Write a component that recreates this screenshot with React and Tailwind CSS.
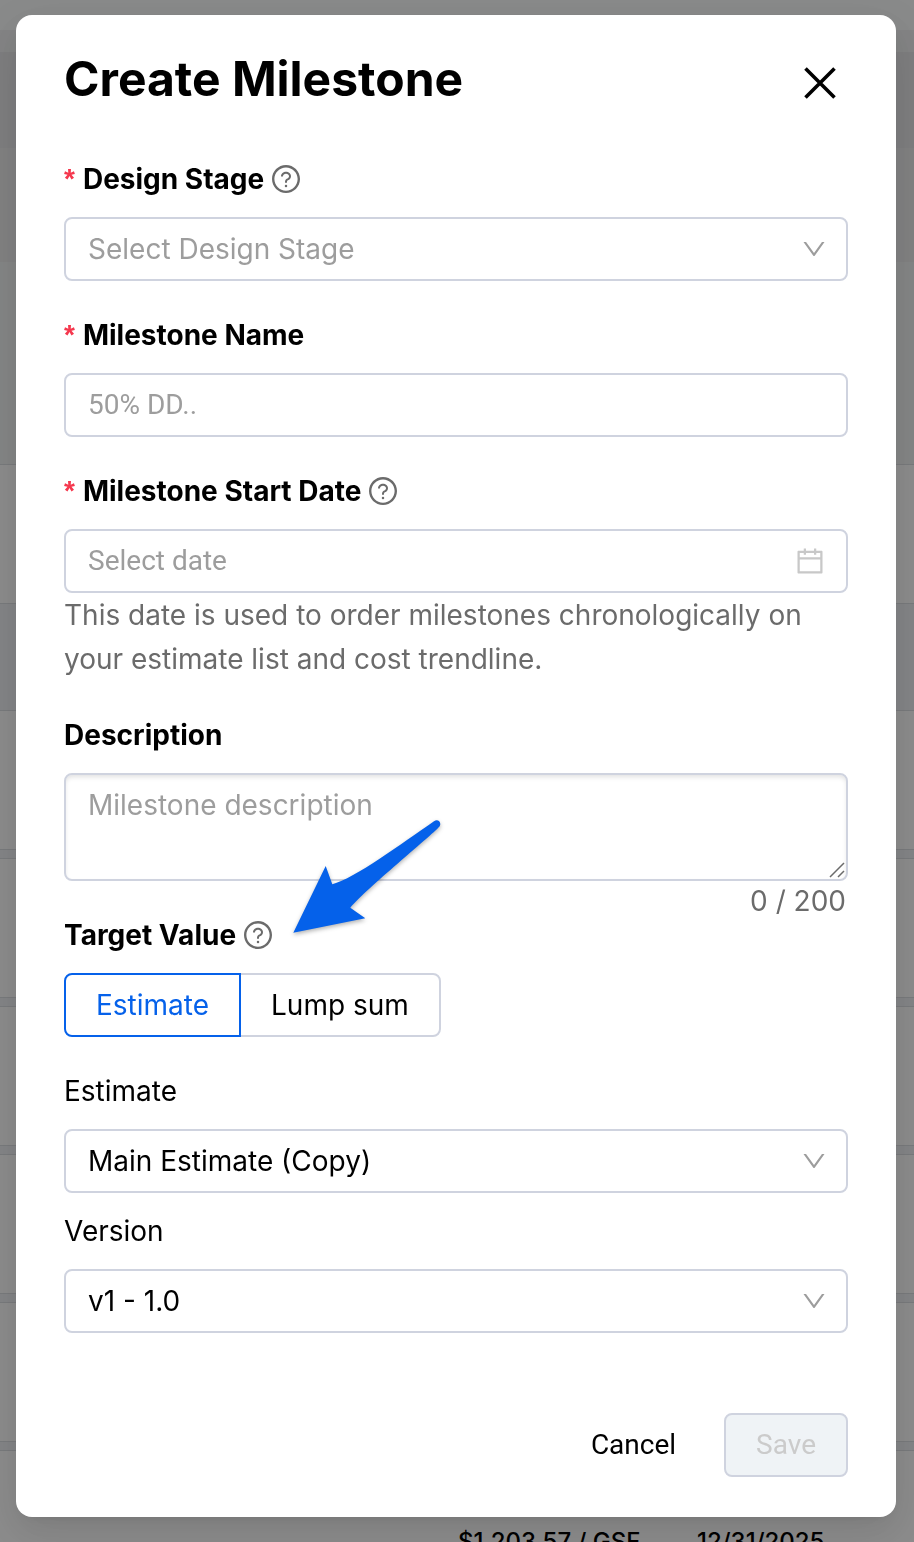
import { useState } from "react";
import { AiOutlineCalendar, AiOutlineDown, AiOutlineQuestionCircle } from "react-icons/ai";

const MAX_DESCRIPTION = 200;

const FIELD_CLASS =
  "block h-16 w-full appearance-none rounded-lg border-2 border-[#cfd3df] bg-white px-[22px] text-[28px] leading-10 outline-none placeholder:text-[#9d9d9d]";

export default function App() {
  return (
    <div className="h-screen overflow-hidden bg-white font-['Inter',sans-serif] text-black">
      <EstimateList />
      <div className="fixed inset-0 overflow-y-auto bg-black/45 px-4 pt-[15px] pb-6">
        <div className="mr-0.5">
          <CreateMilestoneModal />
        </div>
      </div>
    </div>
  );
}

function EstimateList() {
  return (
    <div>
      <div className="h-[30px] bg-[#fafbfc]" />
      <div className="h-[22px] bg-[#f0f1f2]" />
      <div className="h-24 bg-[#e6e6e9]" />
      <div className="h-[114px] bg-[#ececed]" />
      <div className="h-[203px] border-b border-[#dcdfe3] bg-[#f1f3f4]" />
      <div className="h-[139px] border-b border-[#dcdfe3]" />
      <div className="h-[107px] border-b border-[#dcdfe3] bg-[#f0f2f5]" />
      {[1, 2, 3, 4, 5].map((row) => (
        <div key={row}>
          <div className="h-[139px] border-b border-[#dcdfe3]" />
          <div className="h-[9px] border-b border-[#dcdfe3] bg-[#f0f2f5]" />
        </div>
      ))}
      <div className="grid grid-cols-[458px_239px_1fr] pt-[75px] text-2xl font-medium">
        <span />
        <span>$1,203.57 / GSF</span>
        <span>12/31/2025</span>
      </div>
    </div>
  );
}

function CreateMilestoneModal() {
  const [stage, setStage] = useState("");
  const [name, setName] = useState("");
  const [startDate, setStartDate] = useState("");
  const [description, setDescription] = useState("");
  const [targetType, setTargetType] = useState("estimate");
  const canSave = stage && name && startDate;

  return (
    <form
      role="dialog"
      aria-labelledby="modal-title"
      onSubmit={(e) => e.preventDefault()}
      className="rounded-2xl bg-white px-12 pt-8 pb-10 shadow-[0_12px_32px_0_rgba(0,0,0,0.08),0_6px_12px_-8px_rgba(0,0,0,0.12),0_18px_56px_16px_rgba(0,0,0,0.05)]"
    >
      <div className="mb-[46px] flex items-center justify-between">
        <h1 id="modal-title" className="text-5xl leading-[64px] font-bold">Create Milestone</h1>
        <button type="button" aria-label="Close" className="mt-2 mr-3">
          <svg viewBox="0 0 32 32" className="size-8" stroke="currentColor" strokeWidth="3.6" fill="none">
            <path d="M1.5 1.5 L30.5 30.5 M30.5 1.5 L1.5 30.5" />
          </svg>
        </button>
      </div>

      <div className="mb-8">
        <FieldLabel htmlFor="stage" required help>Design Stage</FieldLabel>
        <SelectField id="stage" value={stage} onChange={(e) => setStage(e.target.value)} muted={!stage}>
          <option value="">Select Design Stage</option>
          <option value="sd">Schematic Design</option>
          <option value="dd">Design Development</option>
        </SelectField>
      </div>

      <div className="mb-8">
        <FieldLabel htmlFor="name" required>Milestone Name</FieldLabel>
        <input id="name" type="text" placeholder="50% DD.." value={name} onChange={(e) => setName(e.target.value)} className={`${FIELD_CLASS} pb-0.5 font-['Roboto',sans-serif]`} />
      </div>

      <div className="mb-8">
        <FieldLabel htmlFor="start-date" required help>Milestone Start Date</FieldLabel>
        <div className="relative">
          <input id="start-date" type="text" placeholder="Select date" value={startDate} onChange={(e) => setStartDate(e.target.value)} className={`${FIELD_CLASS} pb-0.5 font-['Roboto',sans-serif]`} />
          <AiOutlineCalendar className="pointer-events-none absolute top-4 right-[22px] size-8 text-[#c8c8c8]" />
        </div>
        <p className="text-[28px] leading-11 text-[#6b6b6b]">This date is used to order milestones chronologically on your estimate list and cost trendline.</p>
      </div>

      <div>
        <FieldLabel htmlFor="description">Description</FieldLabel>
        <div className="relative">
          <textarea
            id="description"
            placeholder="Milestone description"
            maxLength={MAX_DESCRIPTION}
            value={description}
            onChange={(e) => setDescription(e.target.value)}
            className="block h-[108px] w-full resize-none rounded-lg border-2 border-[#cfd3df] px-[22px] py-2 text-[28px] leading-11 shadow-[inset_0_3px_5px_-1px_rgba(0,0,0,0.12)] outline-none placeholder:text-[#9d9d9d]"
          />
          <svg viewBox="0 0 16 16" className="pointer-events-none absolute right-[3px] bottom-[3px] size-4" stroke="#6b6b6b" strokeWidth="1.5" fill="none">
            <path d="M1 15 L15 1 M9 15 L15 9" />
          </svg>
        </div>
        <p className="-mb-2 pr-0.5 text-right text-[28px] leading-10 text-[#6b6b6b]">{description.length} / {MAX_DESCRIPTION}</p>
      </div>

      <fieldset className="mb-8">
        <legend className="relative block">
          <FieldLabel as="span" help>Target Value</FieldLabel>
          <PointerArrow />
        </legend>
        <div className="flex text-[28px]">
          <RadioButton name="target" value="estimate" current={targetType} onSelect={setTargetType} className="rounded-l-lg">Estimate</RadioButton>
          <RadioButton name="target" value="lump" current={targetType} onSelect={setTargetType} className="-ml-0.5 rounded-r-lg">Lump sum</RadioButton>
        </div>
      </fieldset>

      <div className="mb-4">
        <label htmlFor="estimate" className="mb-4 block text-[28px] leading-11">Estimate</label>
        <SelectField id="estimate">
          <option>Main Estimate (Copy)</option>
        </SelectField>
      </div>

      <div className="mb-20">
        <label htmlFor="version" className="mb-4 block text-[28px] leading-11">Version</label>
        <SelectField id="version">
          <option>v1 - 1.0</option>
        </SelectField>
      </div>

      <div className="flex justify-end gap-4 font-['Roboto',sans-serif] text-[28px]">
        <button type="button" className="h-16 px-8">Cancel</button>
        <button type="submit" disabled={!canSave} className="h-16 rounded-lg border-2 border-[#cfd3df] bg-[#eff3f6] px-[30px] disabled:text-[#cbcbcb]">Save</button>
      </div>
    </form>
  );
}

function FieldLabel({ as: Tag = "label", htmlFor, required, help, children }) {
  return (
    <Tag htmlFor={htmlFor} className="mb-4 flex h-11 items-center text-[28px] font-bold">
      {required && <span className="mr-2 font-['Liberation_Sans',sans-serif] text-[#f5384e]">*</span>}
      {children}
      {help && <AiOutlineQuestionCircle className="ml-1.5 size-8 text-[#6b6b6b]" />}
    </Tag>
  );
}

function SelectField({ muted, children, ...props }) {
  return (
    <div className="relative">
      <select {...props} className={`${FIELD_CLASS} ${muted ? "text-[#9d9d9d]" : "text-black"}`}>
        {children}
      </select>
      <AiOutlineDown className="pointer-events-none absolute top-[18px] right-5 size-7 text-[#9d9d9d]" />
    </div>
  );
}

function RadioButton({ name, value, current, onSelect, className, children }) {
  const active = current === value;
  return (
    <label className={`flex h-16 items-center border-2 px-[30px] ${active ? "z-10 border-[#0561ea] text-[#0561ea]" : "border-[#cfd3df]"} ${className}`}>
      <input type="radio" name={name} value={value} checked={active} onChange={() => onSelect(value)} className="sr-only" />
      {children}
    </label>
  );
}

function PointerArrow() {
  return (
    <svg viewBox="0 0 160 130" className="pointer-events-none absolute -top-[97px] left-[225px] h-[130px] w-[160px] drop-shadow-[0_2px_2px_rgba(0,0,0,0.3)]" fill="#0561ea">
      <path d="M4.3 116.7 L36.7 50 L43.3 68.3 C66 62 112 28 145 5.2 C149 2.5 153 6.5 150.5 10.5 C141 21 78 72 61.3 91.7 L76.3 102.3 Z" />
    </svg>
  );
}
